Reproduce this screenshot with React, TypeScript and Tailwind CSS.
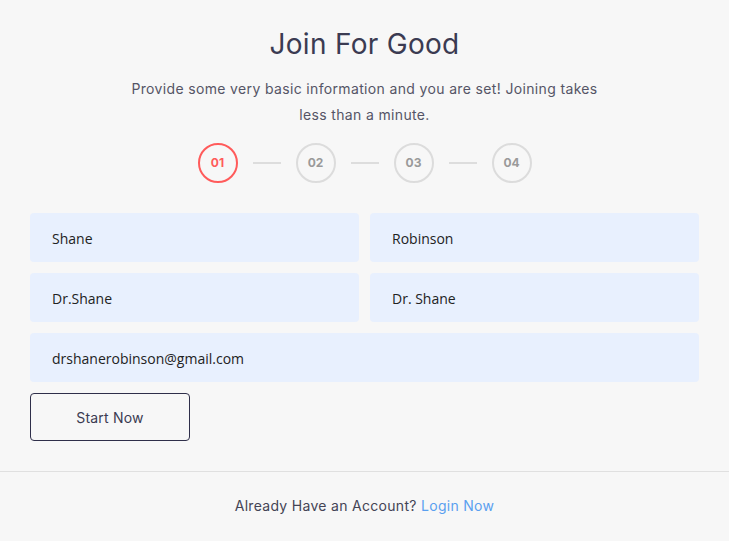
import React from "react";

const steps = ["01", "02", "03", "04"];

export default function App() {
  return (
    <div className="min-h-[541px] w-full bg-[#f7f7f7] font-['Inter',sans-serif] text-[#3c3c54]">
      <div className="px-[30px] pt-[26px]">
        {/* Header */}
        <h1 className="text-center text-[28px] leading-[36px] font-normal tracking-[0.3px] text-[#3b3b52]">
          Join For Good
        </h1>
        <p className="mx-auto mt-[14px] w-[480px] text-center text-[14px] leading-[26px] tracking-[0.35px] text-[#555566]">
          Provide some very basic information and you are set! Joining takes less than a minute.
        </p>

        {/* Steps */}
        <div className="mt-[15px] flex items-center justify-center gap-[15px]">
          {steps.map((s, i) => (
            <React.Fragment key={s}>
              {i > 0 && <span className="h-[2px] w-[28px] bg-[#dddddd]" />}
              <span
                className={
                  i === 0
                    ? "flex h-[40px] w-[40px] items-center justify-center rounded-full border-2 border-[#ff5b5b] text-[12px] font-bold text-[#ff5b5b]"
                    : "flex h-[40px] w-[40px] items-center justify-center rounded-full border-2 border-[#dcdcdc] text-[12px] font-bold text-[#9a9a9a]"
                }
              >
                {s}
              </span>
            </React.Fragment>
          ))}
        </div>

        {/* Form */}
        <div className="mt-[30px] grid grid-cols-2 gap-[11px] font-['Open_Sans',sans-serif] text-[14px] text-[#222]">
          <div className="flex h-[49px] items-center rounded-[4px] bg-[#e8f0fe] pl-[22px] pt-[2px]">Shane</div>
          <div className="flex h-[49px] items-center rounded-[4px] bg-[#e8f0fe] pl-[22px] pt-[2px]">Robinson</div>
          <div className="flex h-[49px] items-center rounded-[4px] bg-[#e8f0fe] pl-[22px] pt-[2px]">Dr.Shane</div>
          <div className="flex h-[49px] items-center rounded-[4px] bg-[#e8f0fe] pl-[22px] pt-[2px]">Dr. Shane</div>
          <div className="col-span-2 flex h-[49px] items-center rounded-[4px] bg-[#e8f0fe] pl-[22px] pt-[2px]">
            drshanerobinson@gmail.com
          </div>
        </div>
        <button className="mt-[11px] h-[48px] w-[160px] rounded-[4px] border border-[#2f2f4a] text-[14px] tracking-[0.2px] text-[#3b3b52]">
          Start Now
        </button>
      </div>

      {/* Footer */}
      <div className="mt-[30px] border-t border-[#e0e0e0] py-[23px] text-center text-[14px] leading-[22px] tracking-[0.3px] text-[#444455]">
        Already Have an Account? <span className="text-[#5aa0f0]">Login Now</span>
      </div>
    </div>
  );
}
